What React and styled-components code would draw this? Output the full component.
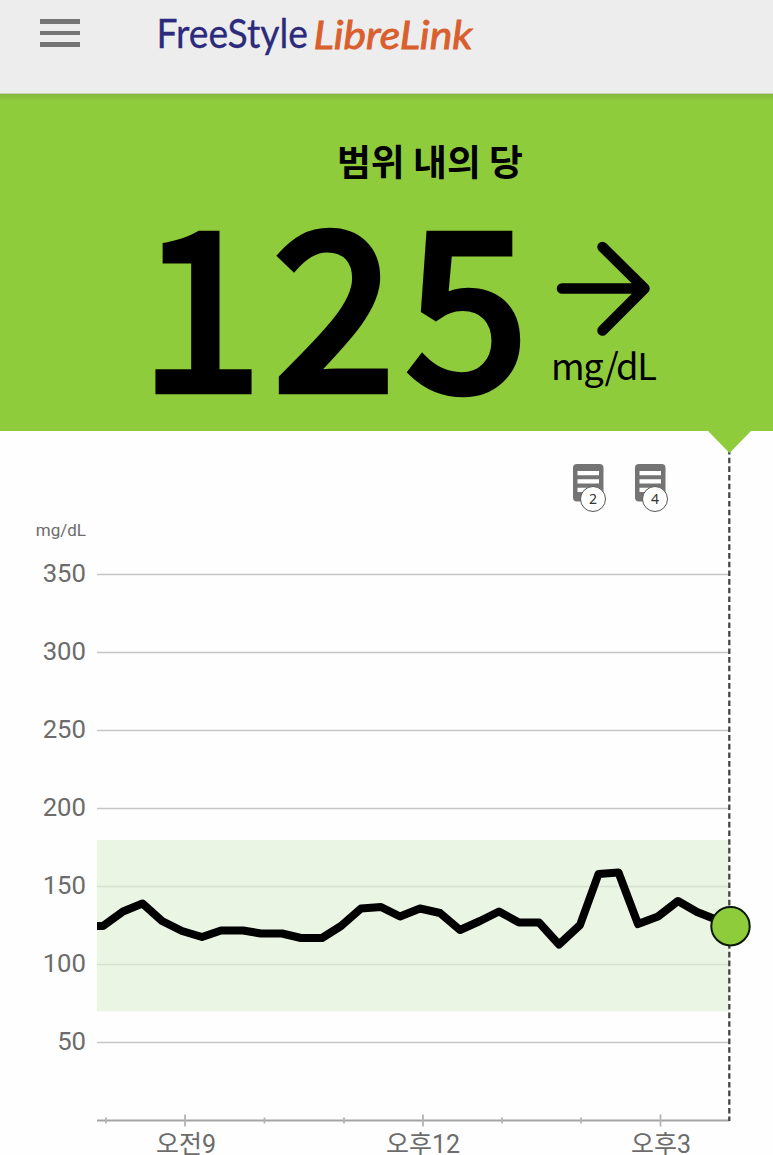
import React from "react";
import styled, { createGlobalStyle } from "styled-components";

const GREEN = "#8fcc3b";
const GREY = "#747474";

const GlobalStyle = createGlobalStyle`
  body { margin: 0; background: #fefefe; overflow: hidden; }
  svg { display: block; }
`;

const Screen = styled.main`
  display: flex;
  flex-direction: column;
  width: 773px;
  height: 1155px;
  overflow: hidden;
  background: #fefefe;
`;

const Header = styled.header`
  display: flex;
  align-items: flex-start;
  flex: none;
  box-sizing: border-box;
  height: 94px;
  padding-left: 40px;
  background: #ededed;
  border-bottom: 1px solid #c9d3bb;
`;

const MenuButton = styled.button`
  display: flex;
  flex-direction: column;
  gap: 7px;
  width: 40px;
  margin: 19px 70px 0 0;
  padding: 0;
  border: 0;
  background: none;
`;

const MenuBar = styled.span`
  height: 4.5px;
  background: ${GREY};
`;

const Reading = styled.section`
  display: flex;
  flex-direction: column;
  flex: none;
  height: 337px;
  color: #000;
  background: linear-gradient(#84b83f, ${GREEN} 8px);
  font-family: "Noto Sans CJK KR", sans-serif;
`;

const Status = styled.h1`
  margin: 40px 0 0 337px;
  font-size: 36.8px;
  line-height: 52px;
  font-weight: 700;
  white-space: nowrap;
`;

const ReadingRow = styled.div`
  display: flex;
  padding-left: 140.5px;
`;

const Value = styled.div`
  width: 410.5px;
  height: 230px;
  font-size: 218px;
  line-height: 219px;
  letter-spacing: 12px;
  -webkit-text-stroke: 8.5px #000;
`;

const Trend = styled.div`
  display: flex;
  flex-direction: column;
  padding-top: 53px;
`;

const Unit = styled.div`
  margin-top: 1.5px;
  font-size: 36.3px;
  line-height: 50px;
  letter-spacing: -1.3px;
`;

const Chart = styled.section`
  display: grid;
  grid-template-columns: 97px 676px;
  grid-template-rows: 33px 646px 45px;
  height: 724px;
  color: #6c6c6c;
  font-family: Roboto, "Noto Sans CJK KR", sans-serif;
`;

const YAxis = styled.div`
  grid-area: 1 / 1 / 4 / 2;
  display: flex;
  flex-direction: column;
  padding: 88.5px 11px 0 0;
  text-align: right;
`;

const AxisUnit = styled.div`
  height: 14px;
  font-size: 17px;
  line-height: 20px;
`;

const YLabel = styled.div`
  height: 78px;
  font-size: 25.7px;
  line-height: 78px;
`;

const Plot = styled.svg`
  grid-area: 1 / 2 / 4 / 3;
`;

const Notes = styled.div`
  grid-area: 2 / 2 / 3 / 3;
  display: flex;
  gap: 26px;
  padding-left: 475.5px;
`;

const Note = styled.div`
  position: relative;
  width: 36px;
  height: 50px;
`;

const Badge = styled.span`
  position: absolute;
  left: 7.5px;
  top: 22px;
  box-sizing: border-box;
  width: 26px;
  height: 26px;
  border: 1px solid #555;
  border-radius: 50%;
  background: #fff;
  color: #333;
  font: 14px/24px "Noto Sans", sans-serif;
  text-align: center;
`;

const XAxis = styled.div`
  grid-area: 3 / 2 / 4 / 3;
  display: flex;
  padding-left: 9px;
`;

const XLabel = styled.div`
  width: ${(p) => p.$width}px;
  padding-top: 20px;
  font-size: 25px;
  line-height: 30px;
  text-align: center;
  white-space: nowrap;
`;

const TRACE = [
  [97, 926], [103, 926], [123, 911.5], [142.5, 903.5], [162, 921], [182, 931],
  [202, 937], [221, 930.5], [243, 930.5], [261, 933.5], [282, 933.5], [301, 938],
  [322, 938], [341, 926], [361, 908.5], [381, 907], [400, 916.5], [420, 908.5],
  [440, 913], [460, 930], [480, 921], [499, 911.5], [519, 922.5], [539, 922.5],
  [559, 944.5], [580, 925], [598.5, 874], [618.5, 872.5], [638, 924], [658, 916.5],
  [678, 901], [697, 912], [730, 925],
];
const LEVELS = [350, 300, 250, 200, 150, 100, 50];
const TICKS = [106, 185, 264.5, 344, 423, 502, 581, 660.5];

function Logo() {
  return (
    <svg width="328" height="62" viewBox="150 0 328 62">
      <text x="156.5" y="47.5" fill="#2b2a7c" stroke="#2b2a7c" strokeWidth="0.3" fontFamily="Lato" fontSize="40.5" textLength="151.5" lengthAdjust="spacingAndGlyphs">
        FreeStyle
      </text>
      <text x="313.5" y="48.7" fill="#d95f2e" stroke="#d95f2e" strokeWidth="0.9" fontFamily="Lato" fontStyle="italic" fontSize="39.5" textLength="159" lengthAdjust="spacingAndGlyphs">
        LibreLink
      </text>
    </svg>
  );
}

function NoteMarker({ count }) {
  return (
    <Note>
      <svg width="31" height="38">
        <rect width="30.5" height="37.5" rx="4" fill={GREY} />
        <path d="M4.5 9.2h21.5M4.5 17.4h21.5M4.5 25.9h21.5" stroke="#fff" strokeWidth="4.2" />
      </svg>
      <Badge>{count}</Badge>
    </Note>
  );
}

function GlucosePlot() {
  return (
    <Plot width="676" height="724" viewBox="97 431 676 724">
      {LEVELS.map((v, i) => (
        <line key={v} x1="97" x2="729" y1={574.5 + i * 78} y2={574.5 + i * 78} stroke="#c5c5c5" strokeWidth="1.4" />
      ))}
      <rect x="97" y="840" width="632" height="171.3" fill="#e1f0d6" fillOpacity="0.65" />
      <line x1="97" x2="729" y1="1120.5" y2="1120.5" stroke="#a4a4a4" strokeWidth="2" />
      {TICKS.map((x, i) => {
        const half = i % 3 === 1 ? 6 : 3;
        return <line key={x} x1={x} x2={x} y1={1120.5 - half} y2={1120.5 + half} stroke="#b4b4b4" strokeWidth="1.8" />;
      })}
      <path d="M729.3 449V1121" stroke="#464646" strokeWidth="2.3" strokeDasharray="5.6 3.07" />
      <path d="M708 431h43l-21.5 22z" fill={GREEN} />
      <polyline points={TRACE.map((p) => p.join(",")).join(" ")} fill="none" stroke="#000" strokeWidth="8" strokeLinejoin="round" />
      <circle cx="730.5" cy="926.2" r="19.2" fill={GREEN} stroke="#0c1606" strokeWidth="2" />
    </Plot>
  );
}

export default function App() {
  return (
    <Screen>
      <GlobalStyle />
      <Header>
        <MenuButton aria-label="menu">
          <MenuBar />
          <MenuBar />
          <MenuBar />
        </MenuButton>
        <Logo />
      </Header>
      <Reading>
        <Status>범위 내의 당</Status>
        <ReadingRow>
          <Value>125</Value>
          <Trend>
            <svg width="104" height="98" viewBox="551 239 104 98">
              <path d="M562 288.5H644M602.5 247L644.5 288.5L602.5 330.5" fill="none" stroke="#000" strokeWidth="10.5" strokeLinecap="round" strokeLinejoin="round" />
            </svg>
            <Unit>mg/dL</Unit>
          </Trend>
        </ReadingRow>
      </Reading>
      <Chart>
        <YAxis>
          <AxisUnit>mg/dL</AxisUnit>
          {LEVELS.map((v) => (
            <YLabel key={v}>{v}</YLabel>
          ))}
        </YAxis>
        <GlucosePlot />
        <Notes>
          <NoteMarker count={2} />
          <NoteMarker count={4} />
        </Notes>
        <XAxis>
          <XLabel $width={160}>오전9</XLabel>
          <XLabel $width={314}>오후12</XLabel>
          <XLabel $width={162}>오후3</XLabel>
        </XAxis>
      </Chart>
    </Screen>
  );
}
